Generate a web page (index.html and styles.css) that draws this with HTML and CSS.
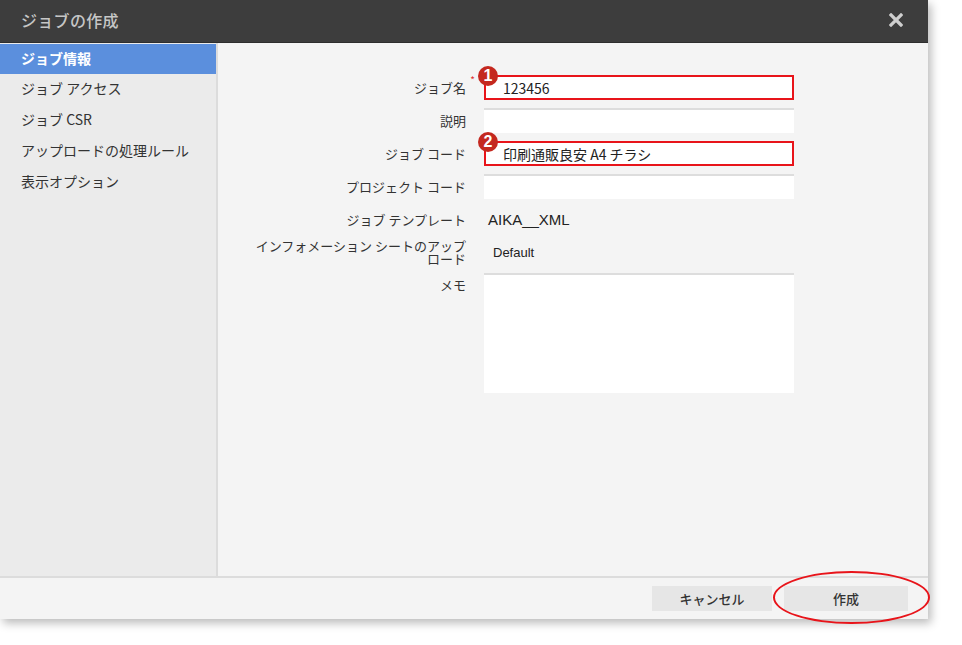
FILE: index.html
```html
<!DOCTYPE html>
<html lang="ja">
<head>
<meta charset="utf-8">
<title>ジョブの作成</title>
<link rel="stylesheet" href="styles.css">
</head>
<body>
<div class="dialog">
  <header class="header">
    <h1 class="title">ジョブの作成</h1>
    <svg class="close" width="14" height="14" viewBox="0 0 14 14"><path d="M2 2 L12 12 M12 2 L2 12" stroke="#cfcfcf" stroke-width="3.2" stroke-linecap="square"/></svg>
  </header>
  <div class="body">
    <nav class="sidebar">
      <div class="nav-item active">ジョブ情報</div>
      <div class="nav-item">ジョブ アクセス</div>
      <div class="nav-item">ジョブ CSR</div>
      <div class="nav-item">アップロードの処理ルール</div>
      <div class="nav-item">表示オプション</div>
    </nav>
    <main class="main">
      <div class="form">
        <div class="label req">ジョブ名<span class="star">*</span></div>
        <div class="input marked"><span class="badge">1</span>123456</div>

        <div class="label">説明</div>
        <div class="input"></div>

        <div class="label">ジョブ コード</div>
        <div class="input marked"><span class="badge">2</span>印刷通販良安 A4 チラシ</div>

        <div class="label">プロジェクト コード</div>
        <div class="input"></div>

        <div class="label">ジョブ テンプレート</div>
        <div class="value big">AIKA__XML</div>

        <div class="label two">インフォメーション シートのアップ<br>ロード</div>
        <div class="value small">Default</div>

        <div class="label top">メモ</div>
        <div class="textarea"></div>
      </div>
    </main>
  </div>
  <footer class="footer">
    <button class="btn">キャンセル</button>
    <button class="btn create">作成</button>
  </footer>
  <div class="ring"></div>
</div>
</body>
</html>
```

FILE: styles.css
```css
html, body {
  margin: 0;
  padding: 0;
  background: #ffffff;
}
body {
  font-family: "Noto Sans CJK JP", "Noto Sans", "Liberation Sans", sans-serif;
  color: #333;
  min-height: 645px;
}
.dialog {
  position: relative;
  width: 928px;
  height: 619px;
  display: flex;
  flex-direction: column;
  background: #f4f4f4;
  box-shadow: 3px 4px 9px rgba(0, 0, 0, 0.28);
}
.header {
  height: 43px;
  flex: none;
  background: #3d3d3d;
  display: flex;
  align-items: center;
  justify-content: space-between;
  padding: 0 25px 2px 21px;
  box-sizing: border-box;
  border-bottom: 1px solid #2e2e2e;
}
.title {
  margin: 0;
  font-size: 16px;
  font-weight: 500;
  color: #c6c6c6;
  letter-spacing: 0.3px;
}
.close {
  display: block;
}
.body {
  flex: 1;
  display: flex;
  min-height: 0;
}
.sidebar {
  width: 216px;
  flex: none;
  background: #ebebeb;
  border-right: 2px solid #dcdcdc;
  padding-top: 1px;
}
.nav-item {
  height: 31px;
  line-height: 28px;
  padding-left: 21px;
  font-size: 14px;
  color: #333;
}
.nav-item.active {
  background: #5b8fdd;
  color: #fff;
  font-weight: 700;
  height: 30px;
  line-height: 28px;
}
.main {
  flex: 1;
  padding: 32px 0 0 32px;
}
.form {
  display: grid;
  grid-template-columns: 216px 310px;
  grid-template-rows: 25px 25px 25px 25px 24px 26px 120px;
  column-gap: 18px;
  row-gap: 8px;
}
.label {
  position: relative;
  font-size: 13px;
  text-align: right;
  align-self: center;
  color: #333;
  white-space: nowrap;
}
.label.two {
  line-height: 13px;
}
.label.top {
  align-self: start;
  padding-top: 2px;
}
.star {
  position: absolute;
  right: -9px;
  top: -6px;
  font-size: 10px;
  color: #e03030;
}
.input {
  position: relative;
  background: #fff;
  border-top: 2px solid #dddddd;
  box-sizing: border-box;
  font-size: 14px;
  line-height: 22px;
  padding-left: 19px;
  color: #222;
}
.input.marked {
  border: 2px solid #e8141a;
  line-height: 22px;
  padding-left: 17px;
}
.badge {
  position: absolute;
  left: -8px;
  top: -11px;
  width: 20px;
  height: 20px;
  border-radius: 50%;
  background: #c4281f;
  color: #fff;
  font-family: "Liberation Sans", sans-serif;
  font-weight: 700;
  font-size: 16px;
  line-height: 20px;
  text-align: center;
}
.value {
  align-self: center;
  color: #222;
  font-family: "Liberation Sans", "Noto Sans", sans-serif;
}
.value.big {
  font-size: 15px;
  padding-left: 4px;
}
.value.small {
  font-size: 13px;
  padding-left: 9px;
}
.textarea {
  background: #fff;
  border-top: 2px solid #dddddd;
}
.footer {
  height: 43px;
  flex: none;
  box-sizing: border-box;
  border-top: 2px solid #dcdcdc;
  background: #f4f4f4;
  display: flex;
  justify-content: flex-end;
  align-items: flex-start;
  gap: 12px;
  padding: 8px 20px 0 0;
}
.btn {
  width: 120px;
  height: 25px;
  border: none;
  background: #e6e6e6;
  font-family: "Noto Sans CJK JP", sans-serif;
  font-size: 13px;
  color: #333;
  padding: 0;
  font-weight: 500;
}
.btn.create {
  width: 124px;
}
.ring {
  position: absolute;
  z-index: 5;
  left: 773px;
  top: 571px;
  width: 153px;
  height: 49px;
  border: 2.5px solid #e8141a;
  border-radius: 50%;
}
```
